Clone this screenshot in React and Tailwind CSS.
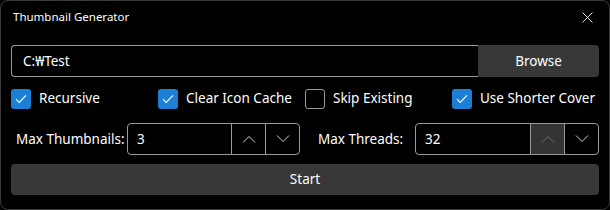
import React from 'react';

const font = { fontFamily: '"Segoe UI", "Noto Sans", "Open Sans", sans-serif' };

const Check = ({ checked, label }) => (
    <label className="flex items-center gap-[8px] h-[21px] whitespace-nowrap">
        {checked ? (
            <span className="w-[20px] h-[20px] shrink-0 rounded-[3px] bg-[#1b7fd6] flex items-center justify-center">
                <svg width="12" height="10" viewBox="0 0 12 10" fill="none">
                    <path d="M1 5.2 L4.2 8.4 L11 1.4" stroke="#ffffff" strokeWidth="1.1" />
                </svg>
            </span>
        ) : (
            <span className="w-[20px] h-[20px] shrink-0 rounded-[3px] border border-[#9a9a9a]" />
        )}
        <span className="text-[13.5px] text-white">{label}</span>
    </label>
);

const Chevron = ({ up, dim }) => (
    <svg width="14" height="8" viewBox="0 0 14 8" fill="none">
        <path d={up ? "M1 7.5 L7 1.5 L13 7.5" : "M1 0.5 L7 6.5 L13 0.5"} stroke={dim ? "#6e6e6e" : "#d0d0d0"} strokeWidth="1" />
    </svg>
);

const Spin = ({ value, width, upDisabled }) => (
    <div className={`flex shrink-0 h-[32px] border border-[#9a9a9a] rounded-[4px] overflow-hidden ${width}`}>
        <div className="flex-1 flex items-center pl-[9px] text-[13.5px] text-white">{value}</div>
        <div className={`w-[34px] border-l border-[#9a9a9a] flex items-center justify-center ${upDisabled ? 'bg-[#333333]' : ''}`}>
            <Chevron up dim={upDisabled} />
        </div>
        <div className="w-[34px] border-l border-[#9a9a9a] flex items-center justify-center">
            <Chevron />
        </div>
    </div>
);

export default function App() {
    return (
        <div className="w-[610px] h-[210px] bg-black" style={font}>
            <div className="w-full h-full bg-black border border-[#3a3a3a] rounded-[8px] flex flex-col">
                {/* Title bar */}
                <div className="h-[32px] flex items-center justify-between pl-[12px] pr-[16px]">
                    <span className="text-[11.5px] text-white">Thumbnail Generator</span>
                    <svg width="11" height="11" viewBox="0 0 11 11" fill="none">
                        <path d="M0.5 0.5 L10.5 10.5 M10.5 0.5 L0.5 10.5" stroke="#e0e0e0" strokeWidth="1" />
                    </svg>
                </div>

                <div className="px-[10px] pt-[12px] flex flex-col">
                    {/* Path row */}
                    <div className="flex h-[32px]">
                        <div className="flex-1 border border-[#9a9a9a] border-r-0 rounded-l-[4px] flex items-center pl-[11px] text-[13.5px] text-white">
                            C:₩Test
                        </div>
                        <button className="w-[121px] bg-[#383838] rounded-r-[4px] text-[13.5px] text-white">Browse</button>
                    </div>

                    {/* Options */}
                    <div className="grid grid-cols-4 mt-[11px]">
                        <Check checked label="Recursive" />
                        <Check checked label="Clear Icon Cache" />
                        <Check label="Skip Existing" />
                        <Check checked label="Use Shorter Cover" />
                    </div>

                    {/* Limits */}
                    <div className="flex items-center mt-[14px] whitespace-nowrap">
                        <span className="ml-[5px] w-[111px] shrink-0 text-[13.5px] text-white">Max Thumbnails:</span>
                        <Spin value="3" width="w-[173px]" />
                        <span className="ml-[18px] w-[97px] shrink-0 text-[13.5px] text-white">Max Threads:</span>
                        <Spin value="32" width="w-[184px]" upDisabled />
                    </div>

                    {/* Start */}
                    <button className="mt-[9px] h-[31px] w-full bg-[#383838] rounded-[4px] text-[13.5px] text-white">Start</button>
                </div>
            </div>
        </div>
    );
}
